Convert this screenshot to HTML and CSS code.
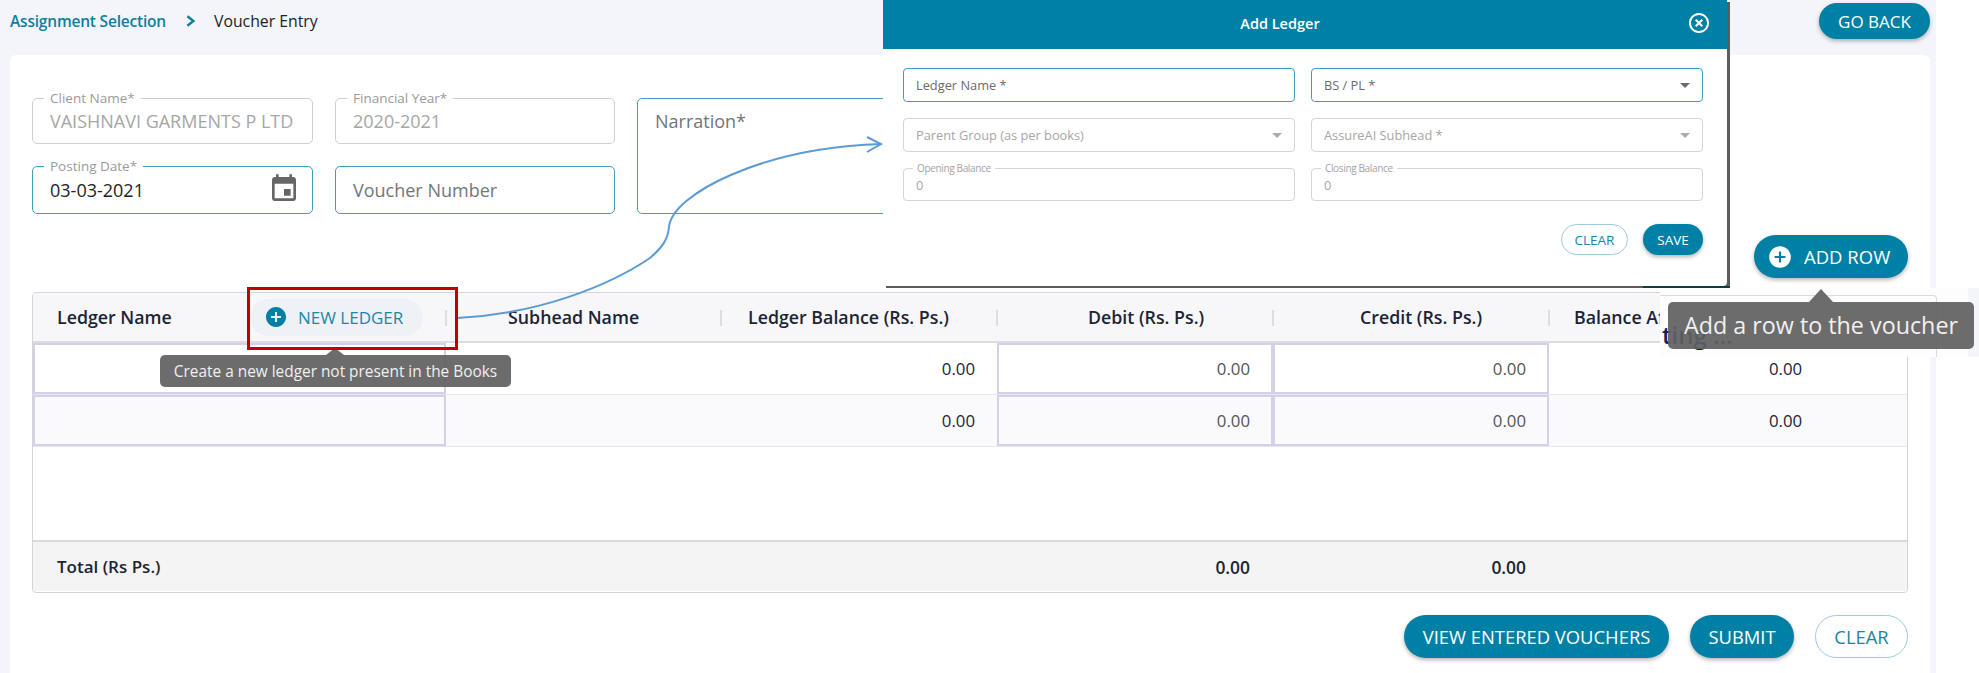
FILE: index.html
```html
<!DOCTYPE html>
<html>
  <head>
    <meta name="viewport" content="width=device-width, initial-scale=1.0">
    <link rel="stylesheet" href="styles.css">
  </head>
  <body>
    <div class="page">
      <div class="topbar">
        <a class="crumb-link">Assignment Selection</a>
        <svg class="crumb-sep" viewBox="0 0 10 10"><polyline points="2,1 7,5 2,9"/></svg>
        <span class="crumb-current">Voucher Entry</span>
        <button class="btn btn-fill btn-back">GO BACK</button>
      </div>

      <div class="card">
        <div class="form-grid">
          <div class="field field-off">
            <label>Client Name*</label>
            <span class="value">VAISHNAVI GARMENTS P LTD</span>
          </div>
          <div class="field field-off">
            <label>Financial Year*</label>
            <span class="value">2020-2021</span>
          </div>
          <div class="field field-on narration">
            <span class="placeholder">Narration*</span>
          </div>
          <div class="field field-on">
            <label>Posting Date*</label>
            <span class="value value-dark">03-03-2021</span>
            <svg class="calendar" viewBox="0 0 24 24"><path d="M17 12h-5v5h5v-5zM16 1v2H8V1H6v2H5c-1.11 0-1.99.9-1.99 2L3 19c0 1.1.89 2 2 2h14c1.1 0 2-.9 2-2V5c0-1.1-.9-2-2-2h-1V1h-2zm3 18H5V8h14v11z"/></svg>
          </div>
          <div class="field field-on">
            <span class="placeholder">Voucher Number</span>
          </div>
        </div>

        <div class="add-row-line">
          <button class="btn btn-fill btn-add">
            <svg viewBox="0 0 24 24"><path d="M12 2C6.48 2 2 6.48 2 12s4.48 10 10 10 10-4.48 10-10S17.52 2 12 2zm5 11h-4v4h-2v-4H7v-2h4V7h2v4h4v2z"/></svg>
            ADD ROW
          </button>
        </div>

        <div class="table">
          <div class="row row-head">
            <div class="cell head-first sep">
              <span>Ledger Name</span>
              <button class="pill">
                <svg viewBox="0 0 24 24"><path d="M12 2C6.48 2 2 6.48 2 12s4.48 10 10 10 10-4.48 10-10S17.52 2 12 2zm5 11h-4v4h-2v-4H7v-2h4V7h2v4h4v2z"/></svg>
                NEW LEDGER
              </button>
            </div>
            <div class="cell sep head-subhead">Subhead Name</div>
            <div class="cell sep head-balance">Ledger Balance (Rs. Ps.)</div>
            <div class="cell sep head-debit">Debit (Rs. Ps.)</div>
            <div class="cell sep head-credit">Credit (Rs. Ps.)</div>
            <div class="cell head-after">Balance After</div>
          </div>

          <div class="row row-body">
            <div class="cell cell-input"></div>
            <div class="cell"></div>
            <div class="cell num">0.00</div>
            <div class="cell cell-input num num-soft">0.00</div>
            <div class="cell cell-input num num-soft">0.00</div>
            <div class="cell num num-last">0.00</div>
          </div>
          <div class="row row-body row-alt">
            <div class="cell cell-input"></div>
            <div class="cell"></div>
            <div class="cell num">0.00</div>
            <div class="cell cell-input num num-soft">0.00</div>
            <div class="cell cell-input num num-soft">0.00</div>
            <div class="cell num num-last">0.00</div>
          </div>

          <div class="table-spacer"></div>

          <div class="row row-total">
            <div class="cell total-label">Total (Rs Ps.)</div>
            <div class="cell"></div>
            <div class="cell"></div>
            <div class="cell num">0.00</div>
            <div class="cell num">0.00</div>
            <div class="cell"></div>
          </div>
        </div>

        <div class="actions">
          <button class="btn btn-fill btn-view">VIEW ENTERED VOUCHERS</button>
          <button class="btn btn-fill btn-submit">SUBMIT</button>
          <button class="btn btn-line btn-clear">CLEAR</button>
        </div>
      </div>
    </div>

    <!-- callout from the new ledger button to the dialog -->
    <svg class="callout" viewBox="0 0 1979 673">
      <path d="M457 318C540 314 610 285 650 258C664 246 668 238 669 227C672 195 760 148 881 144"/>
      <path d="M867 137L881 144L867 152"/>
    </svg>

    <div class="patch">
      <div class="patch-frame"></div>
      <span class="patch-text">ting ...</span>
    </div>

    <div class="dialog">
      <div class="dialog-head">
        <span>Add Ledger</span>
        <svg class="dialog-close" viewBox="0 0 24 24"><path d="M14.59 8L12 10.59 9.41 8 8 9.41 10.59 12 8 14.59 9.41 16 12 13.41 14.59 16 16 14.59 13.41 12 16 9.41 14.59 8zM12 2C6.47 2 2 6.47 2 12s4.47 10 10 10 10-4.47 10-10S17.53 2 12 2zm0 18c-4.41 0-8-3.59-8-8s3.59-8 8-8 8 3.59 8 8-3.59 8-8 8z"/></svg>
      </div>
      <div class="dialog-body">
        <div class="dialog-grid">
          <div class="mini mini-on"><span>Ledger Name *</span></div>
          <div class="mini mini-on"><span>BS / PL *</span><i class="caret"></i></div>
          <div class="mini mini-off"><span>Parent Group (as per books)</span><i class="caret caret-off"></i></div>
          <div class="mini mini-off"><span>AssureAI Subhead *</span><i class="caret caret-off"></i></div>
          <div class="mini mini-off"><label>Opening Balance</label><span>0</span></div>
          <div class="mini mini-off"><label>Closing Balance</label><span>0</span></div>
        </div>
        <div class="dialog-actions">
          <button class="btn btn-line btn-small btn-small-clear">CLEAR</button>
          <button class="btn btn-fill btn-small btn-small-save">SAVE</button>
        </div>
      </div>
    </div>

    <div class="tooltip tip-ledger">Create a new ledger not present in the Books</div>
    <div class="tooltip tip-row">Add a row to the voucher</div>
    <div class="highlight"></div>
  </body>
</html>
```

FILE: styles.css
```css
* {
  box-sizing: border-box;
}

body {
  margin: 0;
  background-color: #fff;
  font-family: "Open Sans", "Noto Sans", sans-serif;
  color: #1d2433;
}

button {
  font-family: inherit;
  cursor: pointer;
}

.page {
  width: 1936px;
  height: 673px;
  padding: 0 6px 0 10px;
  background-color: #f3f5fa;
}

/* Breadcrumb row */
.topbar {
  display: flex;
  align-items: center;
  height: 55px;
  padding-bottom: 13px;
}

.crumb-link {
  color: #0f7f9f;
  font-size: 15.5px;
  font-weight: 600;
  letter-spacing: -0.2px;
}

.crumb-sep {
  width: 12px;
  height: 12px;
  margin: 0 17px 0 19px;
}

.crumb-sep polyline {
  fill: none;
  stroke: #0f7f9f;
  stroke-width: 2;
}

.crumb-current {
  font-size: 15.8px;
  color: #222;
}

/* Buttons */
.btn {
  display: inline-flex;
  align-items: center;
  justify-content: center;
  height: 43px;
  padding: 0;
  border-radius: 22px;
  font-size: 18.4px;
}

.btn-fill {
  border: none;
  background-color: #0080a5;
  color: #fff;
  box-shadow: 0 2px 4px rgba(0, 0, 0, 0.3);
}

.btn-line {
  border: 1px solid #9ccbda;
  background-color: #fff;
  color: #1a84a3;
}

.btn-back {
  width: 111px;
  height: 36px;
  margin-left: auto;
  font-size: 17px;
}

.btn-view {
  width: 265px;
}

.btn-submit {
  width: 104px;
}

.btn-clear {
  width: 93px;
}

/* Main card */
.card {
  height: 618px;
  padding: 43px 22px 0;
  background-color: #fff;
  border-radius: 6px 6px 0 0;
}

.form-grid {
  display: grid;
  grid-template-columns: 281px 280px 900px;
  grid-template-rows: 46px 48px;
  gap: 22px;
}

.field {
  position: relative;
  display: flex;
  align-items: center;
  padding: 0 17px;
  border-radius: 5px;
  font-size: 18px;
}

.field label {
  position: absolute;
  left: 11px;
  top: -10px;
  padding: 0 6px;
  background-color: #fff;
  font-size: 13.5px;
  line-height: 18px;
  color: #9a9a9a;
}

.field-off {
  border: 1px solid #cfcfcf;
}

.field-on {
  border: 1px solid #3f9fba;
}

.value {
  color: #a6a6a6;
}

.value-dark {
  color: #222;
}

.placeholder {
  color: #6f767c;
}

.narration {
  grid-column: 3;
  grid-row: 1 / 3;
  align-items: flex-start;
  padding-top: 10px;
}

.calendar {
  position: absolute;
  right: 12px;
  top: 6px;
  width: 32px;
  height: 32px;
  fill: #666;
}

.add-row-line {
  display: flex;
  justify-content: flex-end;
  margin-top: 21px;
}

.btn-add {
  justify-content: flex-start;
  width: 154px;
  padding-left: 13px;
  gap: 11px;
  font-size: 18.5px;
}

.btn-add svg {
  width: 26px;
  height: 26px;
  fill: #fff;
}

/* Voucher table */
.table {
  height: 301px;
  margin-top: 14px;
  border: 1px solid #d5d5d9;
  border-radius: 4px;
  overflow: hidden;
}

.row {
  display: grid;
  grid-template-columns: 413px 275px 276px 276px 276px 1fr;
}

.cell {
  position: relative;
  display: flex;
  align-items: center;
  font-size: 17.8px;
}

.row-head {
  height: 50px;
  background-color: #f7f7fa;
  border-bottom: 2px solid #dcdce2;
  font-weight: 600;
}

.sep::after {
  content: "";
  position: absolute;
  right: -1px;
  top: 17px;
  width: 2px;
  height: 16px;
  background-color: #dedee2;
}

.head-first {
  justify-content: space-between;
  padding: 0 23px 0 24px;
}

.head-subhead {
  padding-left: 62px;
}

.head-balance {
  padding-left: 27px;
}

.head-debit {
  padding-left: 91px;
}

.head-credit {
  padding-left: 87px;
}

.head-after {
  padding-left: 25px;
  white-space: nowrap;
}

.pill {
  display: flex;
  align-items: center;
  gap: 10px;
  width: 173px;
  height: 37px;
  padding: 0 0 0 14px;
  border: none;
  border-radius: 19px;
  background-color: #eef2f6;
  color: #1a88a8;
  font-size: 17px;
}

.pill svg {
  width: 24px;
  height: 24px;
  fill: #0080a5;
}

.row-body {
  height: 52px;
  border-bottom: 1px solid #e6e6ee;
}

.row-alt {
  background-color: #fafafc;
}

.cell-input {
  border: 2px solid #d3d0e8;
}

.num {
  justify-content: flex-end;
  padding-right: 22px;
  font-size: 16.8px;
  font-weight: 400;
}

.num-soft {
  padding-right: 21px;
  color: #555;
}

.num-last {
  justify-content: flex-start;
  padding-left: 220px;
}

.table-spacer {
  height: 93px;
}

.row-total {
  height: 51px;
  background-color: #f4f4f4;
  border-top: 2px solid #d8d8dc;
  font-weight: 600;
}

.total-label {
  padding-left: 24px;
  font-size: 17px;
}

.row-total .num {
  padding-right: 23px;
  font-size: 17.4px;
  font-weight: 600;
}

.actions {
  display: flex;
  justify-content: flex-end;
  gap: 21px;
  margin-top: 22px;
}

/* Arrow drawn on top of the page */
.callout {
  position: absolute;
  left: 0;
  top: 0;
  width: 1979px;
  height: 673px;
  pointer-events: none;
}

.callout path {
  fill: none;
  stroke: #5b9bd5;
  stroke-width: 2;
}

/* Piece of another screenshot pasted over the table end */
.patch {
  position: absolute;
  left: 1660px;
  top: 288px;
  width: 319px;
  height: 69px;
  padding-left: 2px;
  background-color: #fdfdfe;
  border-right: 11px solid #f3f5fa;
}

.patch-frame {
  position: absolute;
  left: 0;
  top: 7px;
  width: 277px;
  height: 62px;
  border: solid #dcdce0;
  border-width: 1px 1px 0 0;
  border-radius: 0 4px 0 0;
}

.patch-text {
  position: absolute;
  left: 2px;
  top: 31px;
  font-size: 24px;
  font-weight: 600;
  line-height: 32px;
  color: #14205c;
}

/* Add Ledger dialog */
.dialog {
  position: absolute;
  left: 883px;
  top: 0;
  width: 844px;
  height: 286px;
  background-color: #fff;
  border-radius: 0 0 4px 0;
  box-shadow: 3px 2px 0 #5c5c5c;
}

.dialog::after {
  content: "";
  position: absolute;
  left: 760px;
  bottom: -2px;
  width: 87px;
  height: 2px;
  background-color: #0e3c4a;
}

.dialog-head {
  position: relative;
  display: flex;
  align-items: center;
  justify-content: center;
  height: 49px;
  padding: 0 50px 2px 0;
  background-color: #0080a5;
  color: #fff;
  font-size: 14.5px;
  font-weight: 600;
}

.dialog-close {
  position: absolute;
  right: 16px;
  top: 11px;
  width: 24px;
  height: 24px;
  fill: #fff;
}

.dialog-body {
  padding: 19px 24px 0 20px;
}

.dialog-grid {
  display: grid;
  grid-template-columns: 392px 392px;
  grid-template-rows: 34px 34px 33px;
  gap: 16px;
}

.mini {
  position: relative;
  display: flex;
  align-items: center;
  padding: 0 12px;
  border-radius: 4px;
  font-size: 12.8px;
}

.mini label {
  position: absolute;
  left: 9px;
  top: -7px;
  padding: 0 4px;
  background-color: #fff;
  font-size: 10px;
  letter-spacing: -0.35px;
  line-height: 13px;
  color: #a3a3a3;
}

.mini-on {
  border: 1px solid #3f9fba;
  color: #6b6b6b;
}

.mini-off {
  border: 1px solid #d6d6d6;
  color: #a6a6a6;
}

.caret {
  width: 0;
  height: 0;
  margin-left: auto;
  border-left: 5px solid transparent;
  border-right: 5px solid transparent;
  border-top: 5px solid #6b6b6b;
}

.caret-off {
  border-top-color: #acacac;
}

.dialog-actions {
  display: flex;
  justify-content: flex-end;
  gap: 15px;
  margin-top: 23px;
}

.btn-small {
  height: 31px;
  font-size: 13.5px;
  border-radius: 16px;
}

.btn-small-clear {
  width: 67px;
}

.btn-small-save {
  width: 60px;
}

/* Tooltips */
.tooltip {
  position: absolute;
  display: flex;
  align-items: center;
  justify-content: center;
  background-color: rgba(97, 97, 97, 0.93);
  border-radius: 5px;
  color: #f0f0f0;
}

.tooltip::before {
  content: "";
  position: absolute;
  left: 50%;
  width: 0;
  height: 0;
  border-left: 12px solid transparent;
  border-right: 12px solid transparent;
  border-bottom: 13px solid rgba(97, 97, 97, 0.93);
}

.tip-ledger {
  left: 160px;
  top: 355px;
  width: 351px;
  height: 32px;
  font-size: 15.4px;
}

.tip-ledger::before {
  top: -7px;
  margin-left: -10px;
  border-left-width: 9px;
  border-right-width: 9px;
  border-bottom-width: 7px;
}

.tip-row {
  left: 1668px;
  top: 302px;
  width: 306px;
  height: 47px;
  padding-bottom: 2px;
  font-size: 23.3px;
}

.tip-row::before {
  top: -13px;
  margin-left: -12px;
}

/* Red marker round the new ledger button */
.highlight {
  position: absolute;
  left: 247px;
  top: 287px;
  width: 211px;
  height: 63px;
  border: 3px solid #c00000;
}
```
